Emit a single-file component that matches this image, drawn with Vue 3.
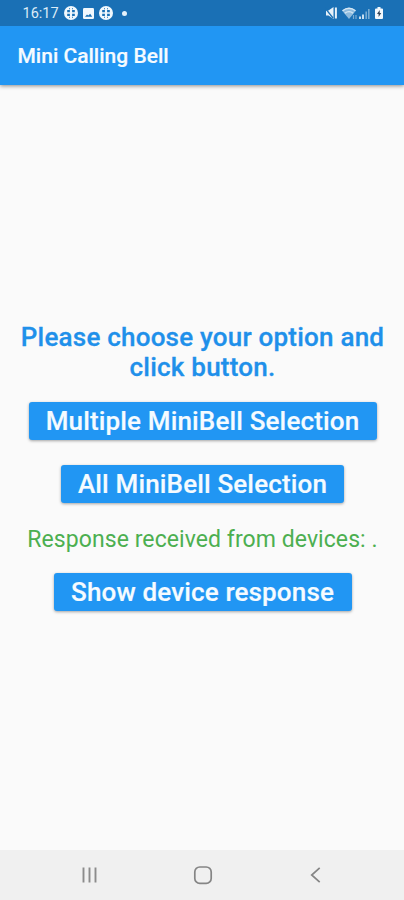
<script setup>
const actions = ['Multiple MiniBell Selection', 'All MiniBell Selection']
</script>

<template>
  <div class="screen">
    <header class="status">
      <span class="time">16:17</span>
      <svg class="badge" viewBox="0 0 14 14"><circle cx="7" cy="7" r="7" fill="#f1f8fd" /><path d="M3.200 4h2.700v2.200H3.200zM8.100 4h2.700v2.200H8.100zM3.200 7.800h2.700V10H3.200zM8.100 7.800h2.700V10H8.100zM5 2.300h1v1H5zM8 2.300h1v1H8zM5 10.700h1v1H5zM8 10.700h1v1H8z" fill="#1a70b5" /></svg>
      <svg class="photo" viewBox="0 0 11 11"><rect width="11" height="11" rx="1.2" fill="#f1f8fd" /><path d="M2 8.700 4 6.400 5.300 7.600 7.200 5.700 9.200 8.700z" fill="#1a70b5" /></svg>
      <svg class="badge" viewBox="0 0 14 14"><circle cx="7" cy="7" r="7" fill="#f1f8fd" /><path d="M3.200 4h2.700v2.200H3.200zM8.100 4h2.700v2.200H8.100zM3.200 7.800h2.700V10H3.200zM8.100 7.800h2.700V10H8.100zM5 2.300h1v1H5zM8 2.300h1v1H8zM5 10.700h1v1H5zM8 10.700h1v1H8z" fill="#1a70b5" /></svg>
      <i class="dot"></i>
      <svg class="system" viewBox="0 0 60 14">
        <path d="M1 4.500h2.500L8.500 1v12L3.500 9.500H1z" fill="#e7f1f9" />
        <path d="M0 2 8 12" stroke="#1a70b5" stroke-width="1.300" />
        <path d="M10.900 1.500v11" stroke="#e7f1f9" stroke-width="2" />
        <path d="M17 4.500Q24-.8 31 4.500L24 13z" fill="#8fbbdd" />
        <path d="M17.500 4.700Q24-.2 30.500 4.700M19.800 7.300Q24 4 28.200 7.300" fill="none" stroke="#d5e7f4" stroke-width="1.300" />
        <path d="M28.500 9v4M31 9v4" stroke="#7bacd3" stroke-width="1.200" />
        <path d="M35 10.500v2.500M38 8.500v4.500" stroke="#dcebf6" stroke-width="1.800" />
        <path d="M41.200 5.500v7.500M43.800 3v10" stroke="#78acd4" stroke-width="1.600" />
        <path d="M51 2.500h1.500V1h3v1.500H57q1 0 1 1V12q0 1-1 1h-6q-1 0-1-1V3.500q0-1 1-1z" fill="#f1f8fd" />
        <path d="M54.700 4 52 8h1.600v3L56.300 7h-1.600z" fill="#34465a" />
      </svg>
    </header>
    <div class="appbar"><h1>Mini Calling Bell</h1></div>
    <main>
      <h2>Please choose your option and<br>click button.</h2>
      <button v-for="(label, i) in actions" :key="label" :class="i ? 'all' : 'multiple'">{{ label }}</button>
      <p>Response received from devices: .</p>
      <button class="show">Show device response</button>
    </main>
    <nav>
      <svg viewBox="0 0 20 20"><path d="M3.500 2.500v15M9.500 2.500v15M15.500 2.500v15" stroke="#8c8c8c" stroke-width="1.900" /></svg>
      <svg viewBox="0 0 20 20"><rect x="1.800" y="2" width="16.400" height="16.400" rx="5" fill="none" stroke="#858585" stroke-width="1.700" /></svg>
      <svg viewBox="0 0 20 20"><path d="M13.700 2.800 5.700 10l8 7.200" fill="none" stroke="#858585" stroke-width="1.700" /></svg>
    </nav>
  </div>
</template>

<style>
body { margin: 0; }
</style>
<style scoped>
.screen { width: 404px; height: 900px; display: flex; flex-direction: column; background: #fafafa; font-family: Roboto, sans-serif; overflow: hidden; }
.status { position: relative; z-index: 1; flex: none; height: 25.500px; box-sizing: border-box; background: #1a70b5; display: flex; align-items: center; padding: 1px 19px 0 22.500px; }
.time { width: 37px; font-size: 14.500px; color: #dcebf7; margin-right: 4.500px; white-space: nowrap; }
.badge { width: 14px; height: 14px; }
.photo { width: 11px; height: 11px; margin: 0 5px; }
.dot { width: 5px; height: 5px; border-radius: 50%; background: #e5f1fa; margin-left: 8.500px; }
.system { width: 60px; height: 14px; margin-left: auto; }
.appbar { flex: none; height: 59px; box-sizing: border-box; background: #2196f3; display: flex; align-items: center; padding: 2px 0 0 17.500px; box-shadow: 0 1px 4px rgba(0,0,0,.45); }
h1 { margin: 0; font-size: 21px; font-weight: 500; color: #f5fbff; white-space: nowrap; -webkit-text-stroke: .2px; }
main { flex: 1; display: flex; flex-direction: column; align-items: center; padding: 237.500px 0 0 1px; }
h2 { margin: 0 0 20px; font-size: 26px; line-height: 30px; font-weight: 500; letter-spacing: .22px; color: #1f90ea; text-align: center; white-space: nowrap; -webkit-text-stroke: .3px; }
button { height: 38px; flex: none; padding: 0; border: 0; border-radius: 3px; background: #2196f3; color: #f5fbff; font: 500 26px/38px Roboto, sans-serif; letter-spacing: .15px; white-space: nowrap; box-shadow: 0 1px 3px rgba(0,0,0,.35); -webkit-text-stroke: .2px; }
.multiple { width: 348px; margin-bottom: 25px; }
.all { width: 283px; }
.show { width: 298px; }
p { margin: 21.500px 0 18.500px; font-size: 23px; line-height: 30px; color: #4caf50; letter-spacing: .07px; white-space: nowrap; }
nav { flex: none; height: 50px; background: #f0f0f0; display: grid; grid-template-columns: 20px 20px 20px; column-gap: 93px; justify-content: center; align-items: center; padding-left: 1px; }
nav svg { width: 20px; height: 20px; }
</style>
